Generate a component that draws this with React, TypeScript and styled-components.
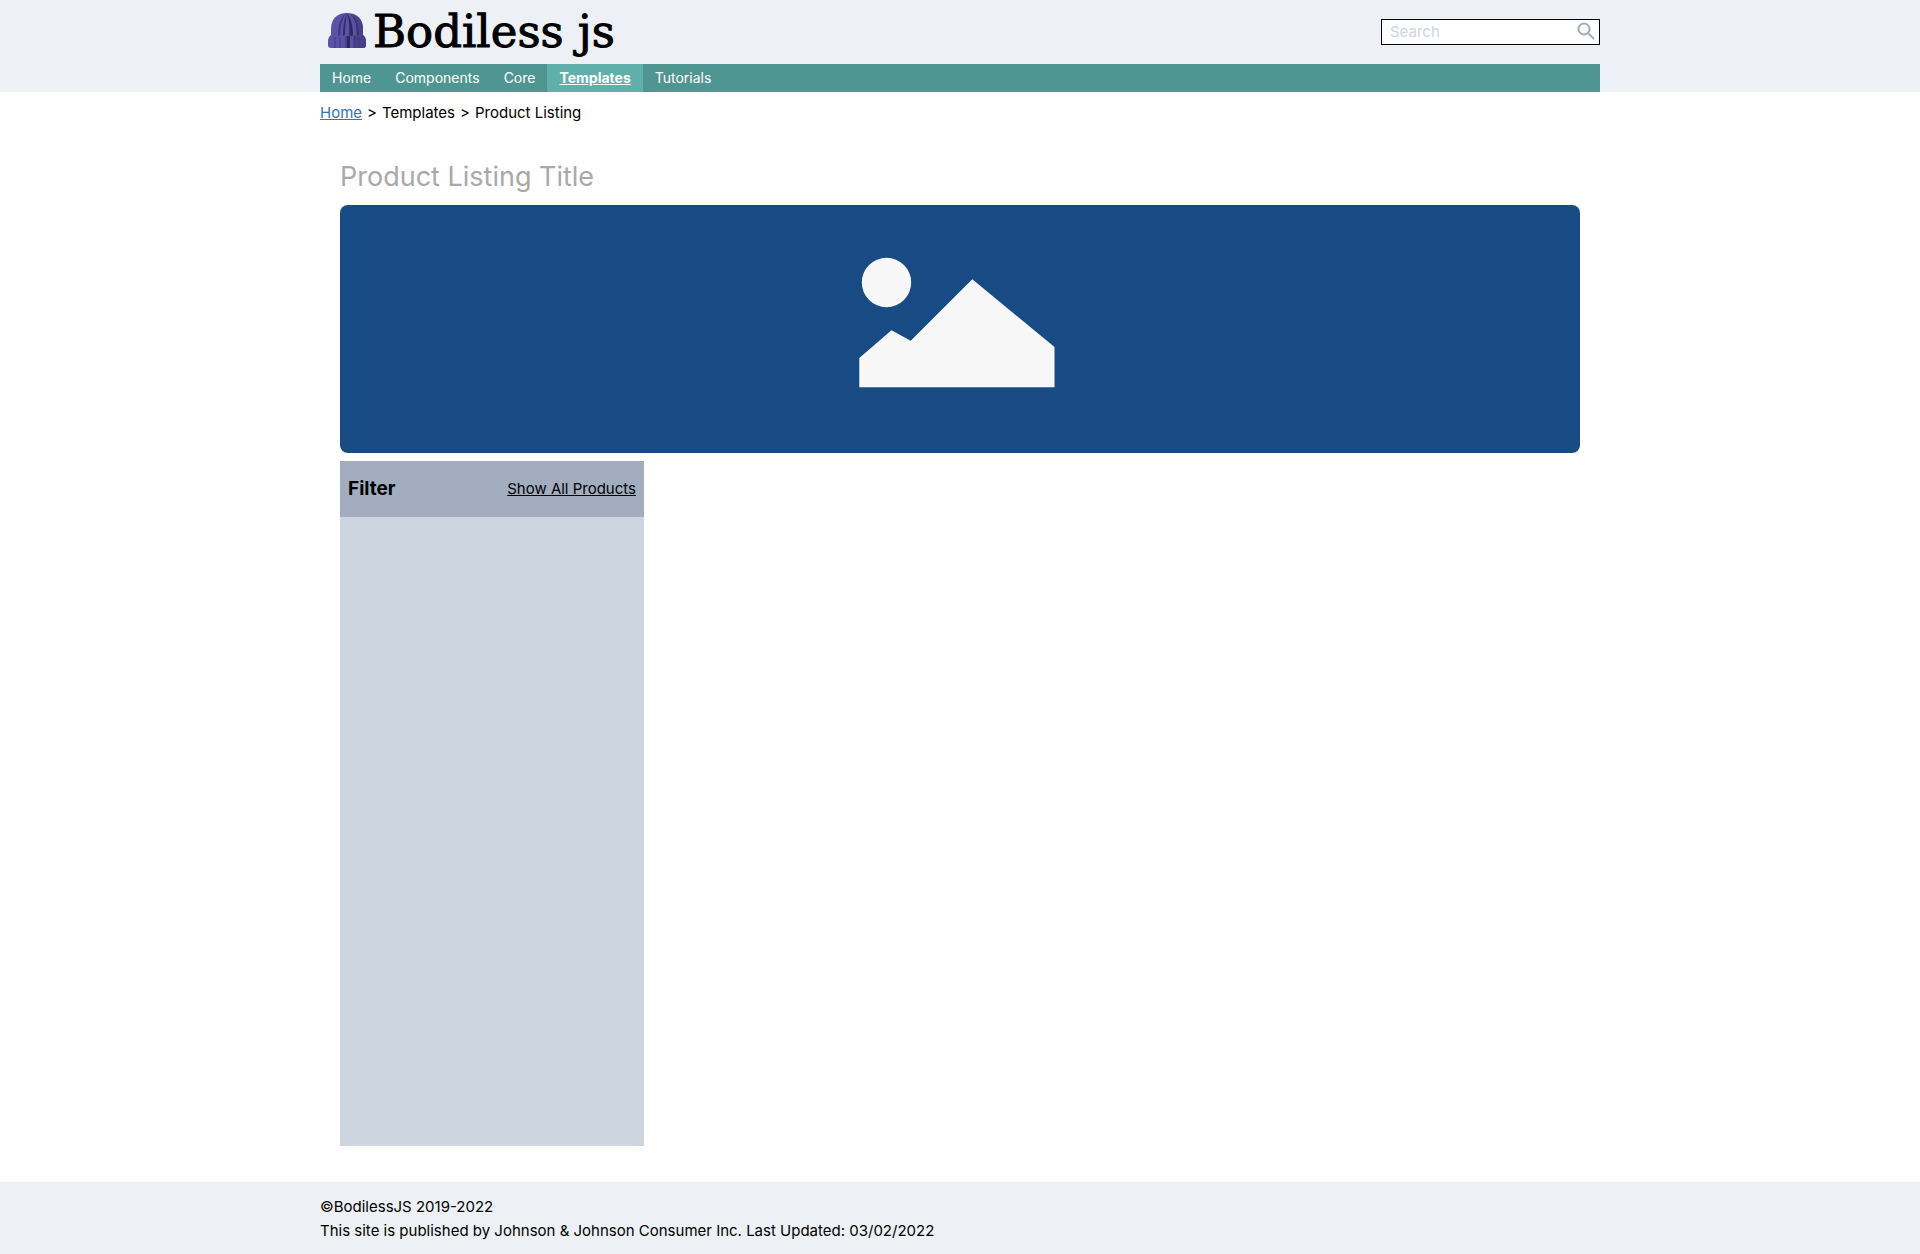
import React from 'react';
import styled, { createGlobalStyle } from 'styled-components';

const GlobalStyle = createGlobalStyle`
  *, *::before, *::after { box-sizing: border-box; }
  html, body { margin: 0; padding: 0; }
  body {
    background: #fff;
    color: #000;
    font-family: Inter, "Liberation Sans", sans-serif;
    font-size: 15px;
    line-height: 24px;
  }
  h1, h2, p, ul, ol { margin: 0; padding: 0; }
  ul, ol { list-style: none; }
`;

const Page = styled.div`
  display: flex;
  flex-direction: column;
  min-height: 100vh;
`;

const Container = styled.div`
  width: 100%;
  max-width: 1280px;
  margin: 0 auto;
`;

const Header = styled.header`
  background: #edf1f6;
`;

const Masthead = styled.div`
  display: flex;
  align-items: center;
  justify-content: space-between;
  height: 64px;
`;

const Brand = styled.a`
  display: flex;
  align-items: center;
  gap: 7px;
  padding-left: 8px;
  color: #000;
  text-decoration: none;
`;

const HatIcon = styled.svg`
  width: 38px;
  height: 36px;
  margin-bottom: 4px;
`;

const Wordmark = styled.span`
  font-family: "DejaVu Serif", "Liberation Serif", serif;
  font-size: 45px;
  line-height: 60px;
  -webkit-text-stroke: 1px #000;
`;

const SearchForm = styled.form`
  display: flex;
  align-items: center;
  width: 219px;
  height: 26px;
  padding: 0 4px 0 8px;
  background: #fff;
  border: 1px solid #000;
`;

const SearchInput = styled.input`
  flex: 1;
  min-width: 0;
  padding: 0;
  border: 0;
  outline: 0;
  background: transparent;
  font: inherit;
  &::placeholder { color: #cbd5e0; opacity: 1; }
`;

const SearchButton = styled.button`
  display: flex;
  padding: 0 0 2px;
  border: 0;
  background: transparent;
  color: #a0aec0;
  cursor: pointer;
`;

const NavBar = styled.nav`
  background: #4f9592;
`;

const NavList = styled.ul`
  display: flex;
`;

const NavLink = styled.a<{ $active?: boolean }>`
  display: block;
  padding: 4px 12px;
  background: ${(p) => (p.$active ? '#5fafab' : 'transparent')};
  color: #fff;
  font-size: 14px;
  font-weight: ${(p) => (p.$active ? 700 : 400)};
  line-height: 20px;
  text-decoration: ${(p) => (p.$active ? 'underline' : 'none')};
`;

const Breadcrumbs = styled.ol`
  display: flex;
  gap: 5px;
  padding-top: 9px;
  li + li::before { content: '>'; margin-right: 5px; }
`;

const CrumbLink = styled.a`
  color: #3b6fb0;
`;

const Main = styled.main`
  display: flex;
  flex: 1;
  flex-direction: column;
  gap: 8px;
  padding: 32px 20px 36px;
`;

const Title = styled.h1`
  color: #a9a9a9;
  font-size: 27px;
  font-weight: 400;
  line-height: 40px;
`;

const Banner = styled.svg`
  display: block;
  width: 100%;
  border-radius: 8px;
  background: #184b84;
`;

const Content = styled(Container)`
  display: flex;
  flex: 1;
  flex-direction: column;
`;

const FilterPanel = styled.aside`
  flex: 1;
  width: 304px;
  background: #cdd5df;
`;

const FilterHeader = styled.div`
  display: flex;
  align-items: center;
  justify-content: space-between;
  height: 56px;
  padding: 0 8px;
  background: #a2aebf;
`;

const FilterTitle = styled.h2`
  font-size: 19px;
  font-weight: 700;
`;

const ShowAll = styled.a`
  color: #000;
`;

const Footer = styled.footer`
  padding: 13px 0 11px;
  background: #edf1f6;
`;

const NAV = ['Home', 'Components', 'Core', 'Templates', 'Tutorials'];

function Hat() {
  return (
    <HatIcon viewBox="0 0 38 36" aria-hidden="true">
      <path d="M3 25V17C3 7 9 1 19 1s16 6 16 16v8z" fill="#5d51a6" />
      <path d="M24 2c7 2 11 7 11 15v8h-7C29 15 28 8 24 2z" fill="#4b4189" />
      <path d="M18 1c-6 5-8 13-8 24h2C12 15 14 7 18 1z" fill="#40377a" />
      <path d="M19 1c-3 6-4 14-4 24h2c0-11 1-18 2-24z" fill="#342c66" />
      <path d="M19 1c2 6 3 14 2 24h4C25 14 23 6 19 1z" fill="#302960" />
      <path d="M21 1c6 5 8 12 8 24h2C31 13 28 5 21 1z" fill="#393170" />
      <path d="M3 23q2 2 4 0q2 2 5 0q2 2 5 0q2 2 4 0q2 2 5 0q2 2 5 0q2 2 4 0q3 2 3 5v5q0 3-3 3H3q-3 0-3-3v-5q0-3 3-5z" fill="#5d51a6" />
      <path d="M26 23q2 2 5 0q2 2 4 0q3 2 3 5v5q0 3-3 3h-9z" fill="#493f88" />
      <path d="M7 25v11M12 25v11M31 25v11" stroke="#42397d" />
      <path d="M18 24v12M26 24v12" stroke="#393170" />
      <path d="M19 24h3v12h-3z" fill="#302960" />
    </HatIcon>
  );
}

export default function App() {
  return (
    <Page>
      <GlobalStyle />
      <Header>
        <Container>
          <Masthead>
            <Brand href="#">
              <Hat />
              <Wordmark>Bodiless js</Wordmark>
            </Brand>
            <SearchForm role="search" onSubmit={(e) => e.preventDefault()}>
              <SearchInput type="text" placeholder="Search" aria-label="Search" />
              <SearchButton type="submit" aria-label="Submit search">
                <svg width="18" height="18" viewBox="0 0 18 18" fill="none" stroke="currentColor" strokeWidth="2">
                  <circle cx="7" cy="7" r="5.5" />
                  <path d="M11 11l6 6" />
                </svg>
              </SearchButton>
            </SearchForm>
          </Masthead>
          <NavBar aria-label="Main">
            <NavList>
              {NAV.map((label) => (
                <li key={label}>
                  <NavLink href="#" $active={label === 'Templates'}>{label}</NavLink>
                </li>
              ))}
            </NavList>
          </NavBar>
        </Container>
      </Header>
      <Content>
        <nav aria-label="Breadcrumb">
          <Breadcrumbs>
            <li><CrumbLink href="#">Home</CrumbLink></li>
            <li>Templates</li>
            <li>Product Listing</li>
          </Breadcrumbs>
        </nav>
        <Main>
          <Title>Product Listing Title</Title>
          <Banner viewBox="0 0 1240 248" role="img" aria-label="Landscape placeholder">
            <circle cx="546.5" cy="77.5" r="24.7" fill="#f7f7f7" />
            <path d="M519.3 153L551.5 125.3L570.7 135.7L632.3 74.3L714.5 142V182.3H519.3z" fill="#f7f7f7" />
          </Banner>
          <FilterPanel>
            <FilterHeader>
              <FilterTitle>Filter</FilterTitle>
              <ShowAll href="#">Show All Products</ShowAll>
            </FilterHeader>
          </FilterPanel>
        </Main>
      </Content>
      <Footer>
        <Container>
          <p>©BodilessJS 2019-2022</p>
          <p>This site is published by Johnson &amp; Johnson Consumer Inc. Last Updated: 03/02/2022</p>
        </Container>
      </Footer>
    </Page>
  );
}
